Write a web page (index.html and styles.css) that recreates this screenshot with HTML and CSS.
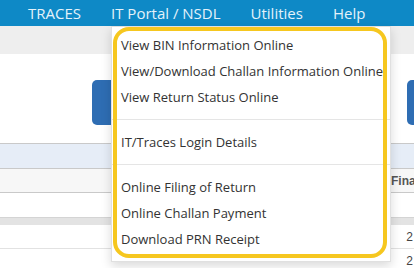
FILE: index.html
```html
<!DOCTYPE html>
<html>
<head>
<meta charset="utf-8">
<link rel="stylesheet" href="styles.css">
</head>
<body>
<nav class="topnav">
  <a class="nav-item">TRACES</a>
  <a class="nav-item">IT Portal / NSDL</a>
  <a class="nav-item">Utilities</a>
  <a class="nav-item">Help</a>
</nav>
<div class="subbar"></div>
<div class="actions">
  <span class="btn btn-left"></span>
  <span class="btn btn-right"></span>
</div>
<div class="grid">
  <div class="row row-head"></div>
  <div class="row row-cols"><span class="col-title">Fina</span></div>
  <div class="row row-filter"></div>
  <div class="row row-sep"></div>
  <div class="row row-data"><span class="num">2</span></div>
  <div class="row row-data"><span class="num">2</span></div>
</div>
<div class="dropdown">
  <ul class="menu">
    <li class="menu-item">View BIN Information Online</li>
    <li class="menu-item">View/Download Challan Information Online</li>
    <li class="menu-item">View Return Status Online</li>
    <li class="divider"></li>
    <li class="menu-item">IT/Traces Login Details</li>
    <li class="divider"></li>
    <li class="menu-item">Online Filing of Return</li>
    <li class="menu-item">Online Challan Payment</li>
    <li class="menu-item">Download PRN Receipt</li>
  </ul>
  <div class="highlight"></div>
</div>
</body>
</html>
```
FILE: styles.css
```css
html, body {
  margin: 0;
  padding: 0;
}
body {
  width: 414px;
  height: 268px;
  overflow: hidden;
  position: relative;
  background: #fff;
  font-family: "Open Sans", "Liberation Sans", sans-serif;
}
.topnav {
  height: 26px;
  background: #0e89c6;
  display: flex;
  align-items: center;
  padding-left: 13px;
}
.nav-item {
  color: #e4f2fa;
  font-size: 15px;
  padding: 0 15px;
  line-height: 26px;
}
.subbar {
  height: 28px;
  background: #eeeeee;
}
.actions {
  height: 89px;
  display: flex;
  justify-content: space-between;
  align-items: flex-start;
  padding-top: 26px;
  box-sizing: border-box;
  overflow: hidden;
}
.btn {
  display: block;
  height: 45px;
  background: #2e6db3;
  border-radius: 5px;
}
.btn-left {
  margin-left: 92px;
  width: 60px;
}
.btn-right {
  width: 30px;
  margin-right: -23px;
}
.grid {
  border-top: 1px solid #c9c9c9;
}
.row {
  display: flex;
  justify-content: flex-end;
  align-items: center;
  box-sizing: border-box;
}
.row-head {
  height: 25px;
  background: #e6edf7;
  border-bottom: 1px solid #c9c9c9;
}
.row-cols {
  height: 24px;
  background: #f7f7f7;
  border-bottom: 1px solid #c9c9c9;
  justify-content: flex-start;
  padding-left: 391px;
}
.col-title {
  font-family: "Liberation Sans", Arial, sans-serif;
  font-weight: bold;
  font-size: 12px;
  color: #555;
}
.row-filter {
  height: 24px;
  background: #fff;
}
.row-sep {
  height: 8px;
  background: #e3e3e3;
  border-top: 1px solid #d4d4d4;
}
.row-data {
  height: 24px;
  border-bottom: 1px solid #e2e2e2;
  padding-right: 1px;
}
.num {
  font-family: "Liberation Sans", Arial, sans-serif;
  font-size: 12px;
  color: #444;
}
.dropdown {
  position: absolute;
  left: 111px;
  top: 26px;
  width: 280px;
  background: #fff;
  border: 1px solid rgba(0,0,0,0.12);
  box-shadow: 0 4px 10px rgba(0,0,0,0.15);
  box-sizing: border-box;
}
.menu {
  list-style: none;
  margin: 0;
  padding: 5px 0 9px;
}
.menu-item {
  padding-left: 9px;
  line-height: 26px;
  height: 26px;
  font-size: 13px;
  color: #333;
  white-space: nowrap;
}
.divider {
  height: 1px;
  margin: 9px 0;
  background: #e5e5e5;
}
.highlight {
  position: absolute;
  left: 1px;
  top: 0px;
  right: 3px;
  bottom: 3px;
  border: 4px solid #f6c71f;
  border-radius: 16px;
}
```
